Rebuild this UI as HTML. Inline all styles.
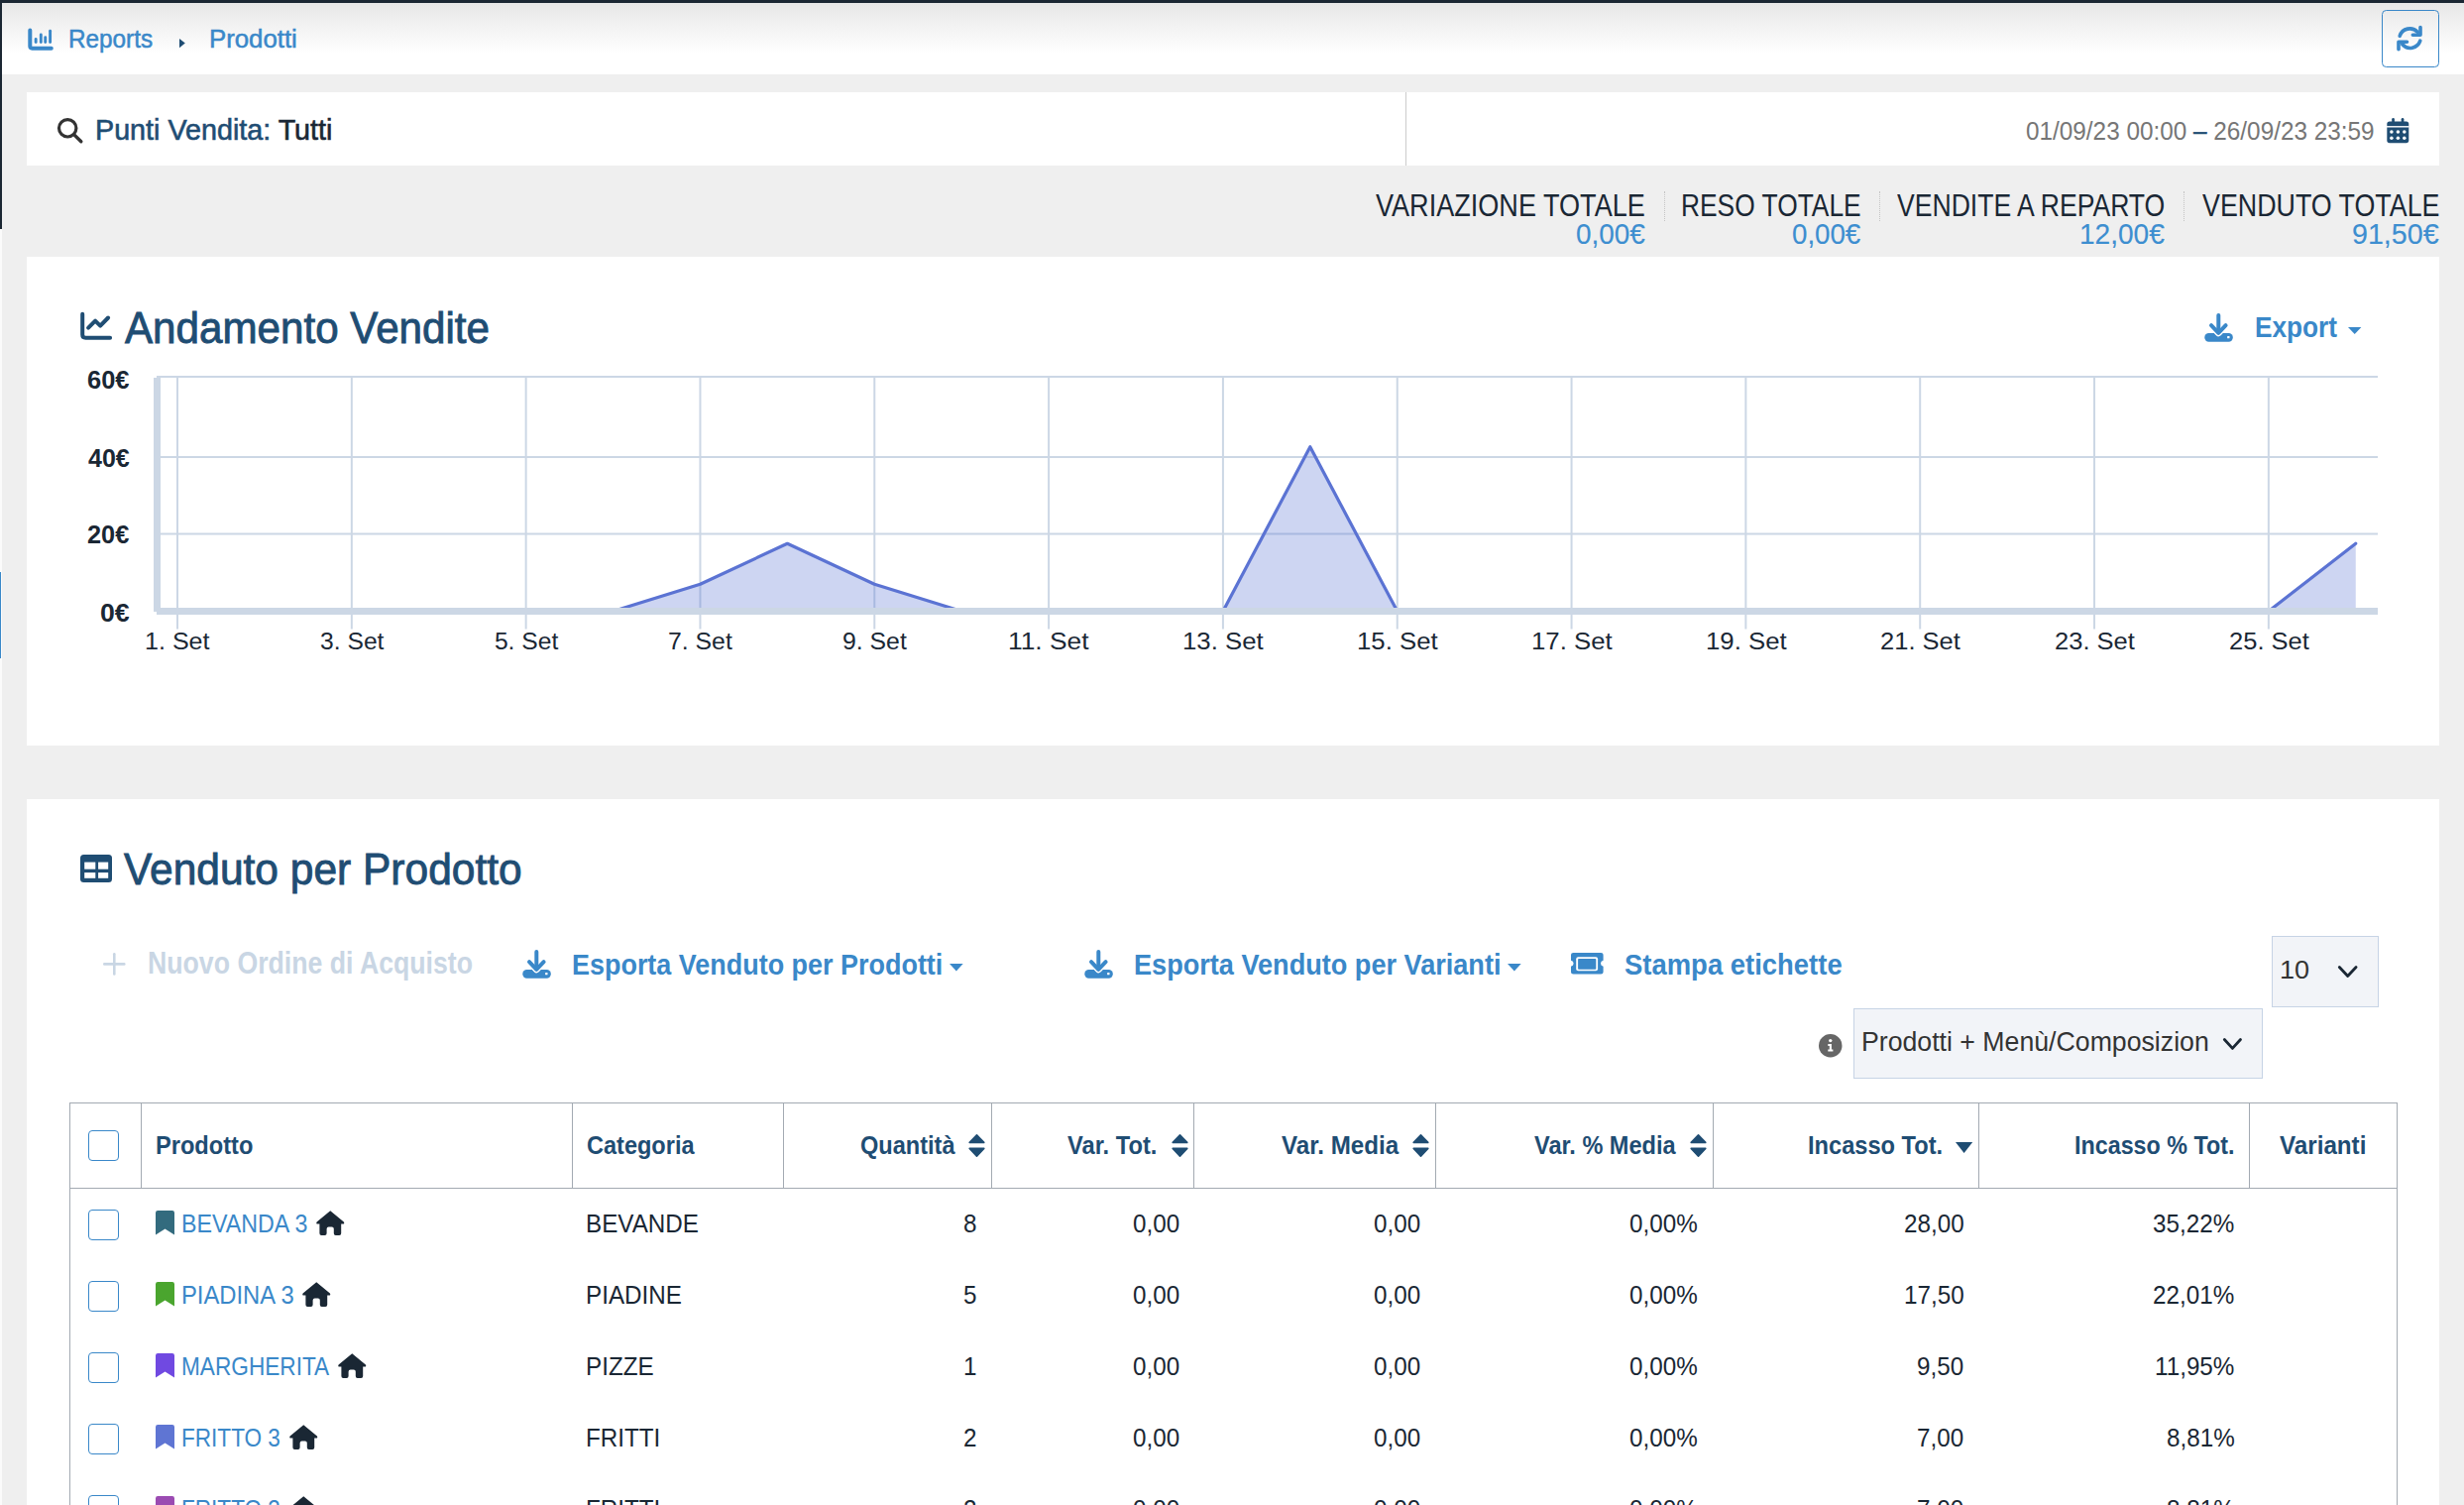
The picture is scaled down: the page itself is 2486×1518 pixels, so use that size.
<!DOCTYPE html><html><head><meta charset="utf-8"><title>Prodotti</title><style>html,body{margin:0;padding:0;width:2486px;height:1518px;overflow:hidden;background:#efefef;font-family:"Liberation Sans",sans-serif}.a{position:absolute}.t{position:absolute;white-space:nowrap;line-height:1;transform-origin:0 0}</style></head><body>
<div class="a" style="left:0px;top:0px;width:2486px;height:3px;background:#1b2733"></div>
<div class="a" style="left:0px;top:0px;width:2px;height:231px;background:#1b2733"></div>
<div class="a" style="left:0px;top:231px;width:2px;height:1287px;background:#fbfbfb"></div>
<div class="a" style="left:0px;top:577px;width:1px;height:87px;background:#3a88c9"></div>
<div class="a" style="left:2px;top:3px;width:2484px;height:72px;background:linear-gradient(#e7e7e7 0%,#fff 70%)"></div>
<svg class="a" style="left:28px;top:28px;width:26px;height:23px;overflow:visible" viewBox="0 0 26 23"><path d="M2.3,2.6 V18.6 Q2.3,20.7 4.4,20.7 H23.8" fill="none" stroke="#3a88c9" stroke-width="4" stroke-linecap="round" stroke-linejoin="round"/><line x1="8.15" y1="11.5" x2="8.15" y2="14.5" stroke="#3a88c9" stroke-width="2.9" stroke-linecap="round"/><line x1="13.3" y1="6.9" x2="13.3" y2="14.5" stroke="#3a88c9" stroke-width="2.9" stroke-linecap="round"/><line x1="17.75" y1="9.7" x2="17.75" y2="14.5" stroke="#3a88c9" stroke-width="2.9" stroke-linecap="round"/><line x1="22.6" y1="3.3" x2="22.6" y2="14.5" stroke="#3a88c9" stroke-width="2.9" stroke-linecap="round"/></svg>
<svg class="a" style="left:181px;top:38.8px;width:6px;height:9.2px;overflow:visible" viewBox="0 0 6 9.2"><polygon points="0,0 5.8,4.6 0,9.2" fill="#1f4d73"/></svg>
<div class="a" style="left:2403px;top:10px;width:58px;height:58px;box-sizing:border-box;border:1.6px solid #3a88c9;border-radius:4.5px"></div>
<svg class="a" style="left:2418px;top:25.5px;width:27px;height:25px;overflow:visible" viewBox="0 0 27 25"><g fill="none" stroke="#3a88c9" stroke-width="3.6" stroke-linecap="round" stroke-linejoin="round"><path d="M3.2,10.3 A10.6,10.6 0 0 1 21.2,6.4"/><path d="M16.3,9.3 H24 V1.6"/><path d="M23.8,15.2 A10.6,10.6 0 0 1 5.8,18.8"/><path d="M10.5,16.3 H2 V23.8"/></g></svg>
<div class="a" style="left:27px;top:93px;width:2434px;height:74px;background:#fff"></div>
<div class="a" style="left:1418px;top:93px;width:1px;height:74px;background:#cccccc"></div>
<svg class="a" style="left:57px;top:118px;width:27px;height:27px;overflow:visible" viewBox="0 0 27 27"><circle cx="11.2" cy="11.3" r="8.7" fill="none" stroke="#333" stroke-width="3.2"/><line x1="17.8" y1="17.9" x2="24.8" y2="24.8" stroke="#333" stroke-width="3.4" stroke-linecap="round"/></svg>
<svg class="a" style="left:2407.7px;top:118.9px;width:22.5px;height:25.2px;overflow:visible" viewBox="0 0 22.5 25.2"><rect x="0.3" y="3.4" width="22" height="21.8" rx="2.6" fill="#1f4d73"/><rect x="5.2" y="0" width="2.7" height="6" rx="1.35" fill="#1f4d73"/><rect x="14.7" y="0" width="2.7" height="6" rx="1.35" fill="#1f4d73"/><rect x="0" y="8.1" width="22.6" height="1.4" fill="#fff"/><circle cx="4.9" cy="14.1" r="1.75" fill="#fff"/><circle cx="4.9" cy="20.3" r="1.75" fill="#fff"/><circle cx="11.4" cy="14.1" r="1.75" fill="#fff"/><circle cx="11.4" cy="20.3" r="1.75" fill="#fff"/><circle cx="17.8" cy="14.1" r="1.75" fill="#fff"/><circle cx="17.8" cy="20.3" r="1.75" fill="#fff"/></svg>
<div class="a" style="left:1678.7px;top:193px;width:1px;height:30px;border-left:1px dotted #c4c4c4"></div>
<div class="a" style="left:1895.6px;top:193px;width:1px;height:30px;border-left:1px dotted #c4c4c4"></div>
<div class="a" style="left:2203px;top:193px;width:1px;height:30px;border-left:1px dotted #c4c4c4"></div>
<div class="a" style="left:27px;top:259px;width:2434px;height:493px;background:#fff"></div>
<svg class="a" style="left:81.3px;top:315.3px;width:32px;height:27.4px;overflow:visible" viewBox="0 0 32 27.4"><path d="M2.2,1.8 V22.5 Q2.2,25.7 5.4,25.7 H30.1" fill="none" stroke="#1f4d73" stroke-width="4" stroke-linecap="round" stroke-linejoin="round"/><polyline points="8.1,15.6 15.1,8.7 20.2,13.7 28.1,5.5" fill="none" stroke="#1f4d73" stroke-width="4" stroke-linecap="round" stroke-linejoin="round"/></svg>
<svg class="a" style="left:2224.4px;top:315.8px;width:29px;height:29px;overflow:visible" viewBox="0 0 29 29"><rect x="0.3" y="19.9" width="28.5" height="8.8" rx="4.2" fill="#3a88c9"/><polyline points="7,12.2 14.3,19.8 21.6,12.2" fill="none" stroke="#fff" stroke-width="6.8" stroke-linecap="round" stroke-linejoin="round"/><line x1="14.3" y1="2" x2="14.3" y2="19" stroke="#3a88c9" stroke-width="4" stroke-linecap="round"/><polyline points="7,12.2 14.3,19.8 21.6,12.2" fill="none" stroke="#3a88c9" stroke-width="4" stroke-linecap="round" stroke-linejoin="round"/><rect x="23.1" y="22.9" width="2.4" height="2.4" rx="0.5" fill="#fff"/></svg>
<svg class="a" style="left:2369.2px;top:330px;width:13.400000000000091px;height:7px;overflow:visible" viewBox="0 0 13.400000000000091 7"><polygon points="0,0 13.400000000000091,0 6.7000000000000455,7" fill="#3a88c9"/></svg>
<svg class="a" style="left:0;top:0;width:2486px;height:760px" viewBox="0 0 2486 760"><rect x="158" y="379" width="2241" height="2" fill="#ccd7e5"/><rect x="158" y="460" width="2241" height="2" fill="#ccd7e5"/><rect x="158" y="537.5" width="2241" height="2" fill="#ccd7e5"/><rect x="178.00" y="379" width="2" height="255.5" fill="#ccd7e5"/><rect x="353.82" y="379" width="2" height="255.5" fill="#ccd7e5"/><rect x="529.64" y="379" width="2" height="255.5" fill="#ccd7e5"/><rect x="705.46" y="379" width="2" height="255.5" fill="#ccd7e5"/><rect x="881.28" y="379" width="2" height="255.5" fill="#ccd7e5"/><rect x="1057.10" y="379" width="2" height="255.5" fill="#ccd7e5"/><rect x="1232.92" y="379" width="2" height="255.5" fill="#ccd7e5"/><rect x="1408.74" y="379" width="2" height="255.5" fill="#ccd7e5"/><rect x="1584.56" y="379" width="2" height="255.5" fill="#ccd7e5"/><rect x="1760.38" y="379" width="2" height="255.5" fill="#ccd7e5"/><rect x="1936.20" y="379" width="2" height="255.5" fill="#ccd7e5"/><rect x="2112.02" y="379" width="2" height="255.5" fill="#ccd7e5"/><rect x="2287.84" y="379" width="2" height="255.5" fill="#ccd7e5"/><polygon points="179.00,616.5 179.00,616.50 266.91,616.50 354.82,616.50 442.73,616.50 530.64,616.50 618.55,616.50 706.46,589.20 794.37,548.25 882.28,589.20 970.19,616.50 1058.10,616.50 1146.01,616.50 1233.92,616.50 1321.83,450.75 1409.74,616.50 1497.65,616.50 1585.56,616.50 1673.47,616.50 1761.38,616.50 1849.29,616.50 1937.20,616.50 2025.11,616.50 2113.02,616.50 2200.93,616.50 2288.84,616.50 2376.75,548.25 2376.75,616.5" fill="#5b73d3" fill-opacity="0.3"/><polyline points="179.00,616.50 266.91,616.50 354.82,616.50 442.73,616.50 530.64,616.50 618.55,616.50 706.46,589.20 794.37,548.25 882.28,589.20 970.19,616.50 1058.10,616.50 1146.01,616.50 1233.92,616.50 1321.83,450.75 1409.74,616.50 1497.65,616.50 1585.56,616.50 1673.47,616.50 1761.38,616.50 1849.29,616.50 1937.20,616.50 2025.11,616.50 2113.02,616.50 2200.93,616.50 2288.84,616.50 2376.75,548.25" fill="none" stroke="#5b73d3" stroke-width="3.2" stroke-linejoin="round" stroke-linecap="round"/><rect x="155" y="381" width="7" height="236" fill="#ccd7e5"/><rect x="158" y="613" width="2241" height="7" fill="#ccd7e5"/></svg>
<div class="a" style="left:27px;top:806px;width:2434px;height:720px;background:#fff"></div>
<svg class="a" style="left:81.4px;top:862px;width:32px;height:28px;overflow:visible" viewBox="0 0 32 28"><rect x="0" y="0" width="32" height="28" rx="3.5" fill="#1f4d73"/><rect x="4.2" y="7.6" width="11.1" height="7.1" fill="#fff"/><rect x="18.1" y="7.6" width="10.1" height="7.1" fill="#fff"/><rect x="4.2" y="18.1" width="11.1" height="5.7" fill="#fff"/><rect x="18.1" y="18.1" width="10.1" height="5.7" fill="#fff"/></svg>
<svg class="a" style="left:104px;top:960.8px;width:22.6px;height:22.8px;overflow:visible" viewBox="0 0 22.6 22.8"><g stroke="#c9d6e4" stroke-width="2.6" stroke-linecap="round"><line x1="11.3" y1="1.3" x2="11.3" y2="21.5"/><line x1="1.3" y1="11.4" x2="21.3" y2="11.4"/></g></svg>
<svg class="a" style="left:526.8px;top:958px;width:29px;height:29px;overflow:visible" viewBox="0 0 29 29"><rect x="0.3" y="19.9" width="28.5" height="8.8" rx="4.2" fill="#3a88c9"/><polyline points="7,12.2 14.3,19.8 21.6,12.2" fill="none" stroke="#fff" stroke-width="6.8" stroke-linecap="round" stroke-linejoin="round"/><line x1="14.3" y1="2" x2="14.3" y2="19" stroke="#3a88c9" stroke-width="4" stroke-linecap="round"/><polyline points="7,12.2 14.3,19.8 21.6,12.2" fill="none" stroke="#3a88c9" stroke-width="4" stroke-linecap="round" stroke-linejoin="round"/><rect x="23.1" y="22.9" width="2.4" height="2.4" rx="0.5" fill="#fff"/></svg>
<svg class="a" style="left:958px;top:971.5px;width:13.700000000000045px;height:7.5px;overflow:visible" viewBox="0 0 13.700000000000045 7.5"><polygon points="0,0 13.700000000000045,0 6.850000000000023,7.5" fill="#3a88c9"/></svg>
<svg class="a" style="left:1093.6px;top:958px;width:29px;height:29px;overflow:visible" viewBox="0 0 29 29"><rect x="0.3" y="19.9" width="28.5" height="8.8" rx="4.2" fill="#3a88c9"/><polyline points="7,12.2 14.3,19.8 21.6,12.2" fill="none" stroke="#fff" stroke-width="6.8" stroke-linecap="round" stroke-linejoin="round"/><line x1="14.3" y1="2" x2="14.3" y2="19" stroke="#3a88c9" stroke-width="4" stroke-linecap="round"/><polyline points="7,12.2 14.3,19.8 21.6,12.2" fill="none" stroke="#3a88c9" stroke-width="4" stroke-linecap="round" stroke-linejoin="round"/><rect x="23.1" y="22.9" width="2.4" height="2.4" rx="0.5" fill="#fff"/></svg>
<svg class="a" style="left:1521.3px;top:971.5px;width:13.700000000000045px;height:7.5px;overflow:visible" viewBox="0 0 13.700000000000045 7.5"><polygon points="0,0 13.700000000000045,0 6.850000000000023,7.5" fill="#3a88c9"/></svg>
<svg class="a" style="left:1584.9px;top:961.3px;width:32.6px;height:21.6px;overflow:visible" viewBox="0 0 32.6 21.6"><path d="M2.5,0 H30.1 Q32.6,0 32.6,2.5 V7.8 Q30,8.4 30,10.8 Q30,13.2 32.6,13.8 V19.1 Q32.6,21.6 30.1,21.6 H2.5 Q0,21.6 0,19.1 V13.8 Q2.6,13.2 2.6,10.8 Q2.6,8.4 0,7.8 V2.5 Q0,0 2.5,0 Z" fill="#3a88c9"/><rect x="5.2" y="4.3" width="21.9" height="14" rx="2" fill="#fff"/><rect x="7.1" y="5.9" width="18.2" height="10.8" rx="0.8" fill="#3a88c9"/></svg>
<div class="a" style="left:2292px;top:944px;width:108px;height:72px;box-sizing:border-box;background:#f2f4f8;border:1px solid #c6d3e5"></div>
<svg class="a" style="left:2359.3px;top:974px;width:19.4px;height:12px;overflow:visible" viewBox="0 0 19.4 12"><polyline points="1.3,1.5 9.7,10.5 18.099999999999998,1.5" fill="none" stroke="#1a2734" stroke-width="2.8" stroke-linecap="round" stroke-linejoin="round"/></svg>
<div class="a" style="left:1869.5px;top:1016.6px;width:413px;height:71px;box-sizing:border-box;background:#f2f4f8;border:1px solid #c6d3e5"></div>
<svg class="a" style="left:2242.8px;top:1046.5px;width:18.8px;height:11.9px;overflow:visible" viewBox="0 0 18.8 11.9"><polyline points="1.3,1.5 9.4,10.4 17.5,1.5" fill="none" stroke="#1a2734" stroke-width="2.8" stroke-linecap="round" stroke-linejoin="round"/></svg>
<svg class="a" style="left:1834.5px;top:1042.6px;width:23.5px;height:23.5px;overflow:visible" viewBox="0 0 23.5 23.5"><circle cx="11.75" cy="11.75" r="11.75" fill="#666"/><circle cx="11.75" cy="6.6" r="1.7" fill="#fff"/><path d="M9.3,10 H12.9 V15.6 H14.4 V17.6 H9.3 V15.6 H10.8 V12 H9.3 Z" fill="#fff"/></svg>
<div class="a" style="left:70px;top:1112px;width:2348.5px;height:600px;box-sizing:border-box;border:1px solid #a3aab2;border-width:1.2px 1.2px 0 1.2px"></div>
<div class="a" style="left:70px;top:1198px;width:2348.5px;height:1.2px;background:#a3aab2"></div>
<div class="a" style="left:142.0px;top:1112px;width:1.2px;height:86.5px;background:#a3aab2"></div>
<div class="a" style="left:576.9px;top:1112px;width:1.2px;height:86.5px;background:#a3aab2"></div>
<div class="a" style="left:789.9px;top:1112px;width:1.2px;height:86.5px;background:#a3aab2"></div>
<div class="a" style="left:999.8px;top:1112px;width:1.2px;height:86.5px;background:#a3aab2"></div>
<div class="a" style="left:1203.8000000000002px;top:1112px;width:1.2px;height:86.5px;background:#a3aab2"></div>
<div class="a" style="left:1448.2px;top:1112px;width:1.2px;height:86.5px;background:#a3aab2"></div>
<div class="a" style="left:1727.9px;top:1112px;width:1.2px;height:86.5px;background:#a3aab2"></div>
<div class="a" style="left:1995.8000000000002px;top:1112px;width:1.2px;height:86.5px;background:#a3aab2"></div>
<div class="a" style="left:2268.8px;top:1112px;width:1.2px;height:86.5px;background:#a3aab2"></div>
<div class="a" style="left:89.2px;top:1140.2px;width:30.5px;height:30.5px;box-sizing:border-box;border:1.6px solid #3a88c9;border-radius:4px;background:#fff"></div>
<svg class="a" style="left:977px;top:1144px;width:17px;height:23px;overflow:visible" viewBox="0 0 17 23"><path d="M1.2,8.4 L8.5,0.9 L15.8,8.4 Z" fill="#1f4d73" stroke="#1f4d73" stroke-width="1.6" stroke-linejoin="round"/><path d="M1.2,14.4 L15.8,14.4 L8.5,22.1 Z" fill="#1f4d73" stroke="#1f4d73" stroke-width="1.6" stroke-linejoin="round"/></svg>
<svg class="a" style="left:1182px;top:1144px;width:17px;height:23px;overflow:visible" viewBox="0 0 17 23"><path d="M1.2,8.4 L8.5,0.9 L15.8,8.4 Z" fill="#1f4d73" stroke="#1f4d73" stroke-width="1.6" stroke-linejoin="round"/><path d="M1.2,14.4 L15.8,14.4 L8.5,22.1 Z" fill="#1f4d73" stroke="#1f4d73" stroke-width="1.6" stroke-linejoin="round"/></svg>
<svg class="a" style="left:1424.7px;top:1144px;width:17px;height:23px;overflow:visible" viewBox="0 0 17 23"><path d="M1.2,8.4 L8.5,0.9 L15.8,8.4 Z" fill="#1f4d73" stroke="#1f4d73" stroke-width="1.6" stroke-linejoin="round"/><path d="M1.2,14.4 L15.8,14.4 L8.5,22.1 Z" fill="#1f4d73" stroke="#1f4d73" stroke-width="1.6" stroke-linejoin="round"/></svg>
<svg class="a" style="left:1705px;top:1144px;width:17px;height:23px;overflow:visible" viewBox="0 0 17 23"><path d="M1.2,8.4 L8.5,0.9 L15.8,8.4 Z" fill="#1f4d73" stroke="#1f4d73" stroke-width="1.6" stroke-linejoin="round"/><path d="M1.2,14.4 L15.8,14.4 L8.5,22.1 Z" fill="#1f4d73" stroke="#1f4d73" stroke-width="1.6" stroke-linejoin="round"/></svg>
<svg class="a" style="left:1972.8px;top:1151.5px;width:17.200000000000045px;height:11.099999999999909px;overflow:visible" viewBox="0 0 17.200000000000045 11.099999999999909"><polygon points="0,0 17.200000000000045,0 8.600000000000023,11.099999999999909" fill="#1f4d73"/></svg>
<div class="a" style="left:89.2px;top:1220.3px;width:30.5px;height:30.5px;box-sizing:border-box;border:1.6px solid #3a88c9;border-radius:4px;background:#fff"></div>
<svg class="a" style="left:157.2px;top:1221.1px;width:19px;height:25px;overflow:visible" viewBox="0 0 19 25"><path d="M0,2.2 Q0,0 2.2,0 H16.8 Q19,0 19,2.2 V24.6 L9.5,18.6 L0,24.6 Z" fill="#336b7e"/></svg>
<svg class="a" style="left:319.1px;top:1221px;width:28.5px;height:25px;overflow:visible" viewBox="0 0 28.5 25"><path d="M14.25,0.3 L27.9,11.6 Q29,13.6 27,13.6 H25.2 V23 Q25.2,24.9 23.3,24.9 H19.7 Q17.8,24.9 17.8,23 V18.5 Q17.8,16.5 15.8,16.5 H12.6 Q10.6,16.5 10.6,18.5 V23 Q10.6,24.9 8.7,24.9 H5.3 Q3.4,24.9 3.4,23 V13.6 H1.5 Q-0.5,13.6 0.6,11.6 Z" fill="#1a2734"/></svg>
<div class="a" style="left:89.2px;top:1292.3px;width:30.5px;height:30.5px;box-sizing:border-box;border:1.6px solid #3a88c9;border-radius:4px;background:#fff"></div>
<svg class="a" style="left:157.2px;top:1293.1px;width:19px;height:25px;overflow:visible" viewBox="0 0 19 25"><path d="M0,2.2 Q0,0 2.2,0 H16.8 Q19,0 19,2.2 V24.6 L9.5,18.6 L0,24.6 Z" fill="#4aa52e"/></svg>
<svg class="a" style="left:305.4px;top:1293px;width:28.5px;height:25px;overflow:visible" viewBox="0 0 28.5 25"><path d="M14.25,0.3 L27.9,11.6 Q29,13.6 27,13.6 H25.2 V23 Q25.2,24.9 23.3,24.9 H19.7 Q17.8,24.9 17.8,23 V18.5 Q17.8,16.5 15.8,16.5 H12.6 Q10.6,16.5 10.6,18.5 V23 Q10.6,24.9 8.7,24.9 H5.3 Q3.4,24.9 3.4,23 V13.6 H1.5 Q-0.5,13.6 0.6,11.6 Z" fill="#1a2734"/></svg>
<div class="a" style="left:89.2px;top:1364.3px;width:30.5px;height:30.5px;box-sizing:border-box;border:1.6px solid #3a88c9;border-radius:4px;background:#fff"></div>
<svg class="a" style="left:157.2px;top:1365.1px;width:19px;height:25px;overflow:visible" viewBox="0 0 19 25"><path d="M0,2.2 Q0,0 2.2,0 H16.8 Q19,0 19,2.2 V24.6 L9.5,18.6 L0,24.6 Z" fill="#7049e1"/></svg>
<svg class="a" style="left:341.3px;top:1365px;width:28.5px;height:25px;overflow:visible" viewBox="0 0 28.5 25"><path d="M14.25,0.3 L27.9,11.6 Q29,13.6 27,13.6 H25.2 V23 Q25.2,24.9 23.3,24.9 H19.7 Q17.8,24.9 17.8,23 V18.5 Q17.8,16.5 15.8,16.5 H12.6 Q10.6,16.5 10.6,18.5 V23 Q10.6,24.9 8.7,24.9 H5.3 Q3.4,24.9 3.4,23 V13.6 H1.5 Q-0.5,13.6 0.6,11.6 Z" fill="#1a2734"/></svg>
<div class="a" style="left:89.2px;top:1436.3px;width:30.5px;height:30.5px;box-sizing:border-box;border:1.6px solid #3a88c9;border-radius:4px;background:#fff"></div>
<svg class="a" style="left:157.2px;top:1437.1px;width:19px;height:25px;overflow:visible" viewBox="0 0 19 25"><path d="M0,2.2 Q0,0 2.2,0 H16.8 Q19,0 19,2.2 V24.6 L9.5,18.6 L0,24.6 Z" fill="#5f75d3"/></svg>
<svg class="a" style="left:291.9px;top:1437px;width:28.5px;height:25px;overflow:visible" viewBox="0 0 28.5 25"><path d="M14.25,0.3 L27.9,11.6 Q29,13.6 27,13.6 H25.2 V23 Q25.2,24.9 23.3,24.9 H19.7 Q17.8,24.9 17.8,23 V18.5 Q17.8,16.5 15.8,16.5 H12.6 Q10.6,16.5 10.6,18.5 V23 Q10.6,24.9 8.7,24.9 H5.3 Q3.4,24.9 3.4,23 V13.6 H1.5 Q-0.5,13.6 0.6,11.6 Z" fill="#1a2734"/></svg>
<div class="a" style="left:89.2px;top:1508.3px;width:30.5px;height:30.5px;box-sizing:border-box;border:1.6px solid #3a88c9;border-radius:4px;background:#fff"></div>
<svg class="a" style="left:157.2px;top:1509.1px;width:19px;height:25px;overflow:visible" viewBox="0 0 19 25"><path d="M0,2.2 Q0,0 2.2,0 H16.8 Q19,0 19,2.2 V24.6 L9.5,18.6 L0,24.6 Z" fill="#9b4bb2"/></svg>
<svg class="a" style="left:291.9px;top:1509px;width:28.5px;height:25px;overflow:visible" viewBox="0 0 28.5 25"><path d="M14.25,0.3 L27.9,11.6 Q29,13.6 27,13.6 H25.2 V23 Q25.2,24.9 23.3,24.9 H19.7 Q17.8,24.9 17.8,23 V18.5 Q17.8,16.5 15.8,16.5 H12.6 Q10.6,16.5 10.6,18.5 V23 Q10.6,24.9 8.7,24.9 H5.3 Q3.4,24.9 3.4,23 V13.6 H1.5 Q-0.5,13.6 0.6,11.6 Z" fill="#1a2734"/></svg>
<span class="t" style="left:68.76px;top:26.87px;font-size:25.80px;font-weight:normal;color:#3a88c9;transform:scaleX(0.9422);-webkit-text-stroke:0.5px currentColor;">Reports</span>
<span class="t" style="left:210.94px;top:26.87px;font-size:25.80px;font-weight:normal;color:#3a88c9;-webkit-text-stroke:0.5px currentColor;">Prodotti</span>
<span class="t" style="left:96.10px;top:115.75px;font-size:29.71px;font-weight:normal;color:#1f4d73;transform:scaleX(0.9666);-webkit-text-stroke:0.6px;">Punti Vendita: <span style="color:#1a2734">Tutti</span></span>
<span class="t" style="left:2043.63px;top:119.87px;font-size:25.22px;font-weight:normal;color:#767676;transform:scaleX(0.9642);">01/09/23 00:00 <span style="color:#1f4d73;-webkit-text-stroke:0.4px currentColor">–</span> 26/09/23 23:59</span>
<span class="t" style="left:1388.43px;top:192.13px;font-size:30.43px;font-weight:normal;color:#1a2734;transform:scaleX(0.8900);">VARIAZIONE TOTALE</span>
<span class="t" style="left:1589.88px;top:221.22px;font-size:29.86px;font-weight:normal;color:#3d8ed0;transform:scaleX(0.9338);-webkit-text-stroke:0.15px currentColor;">0,00€</span>
<span class="t" style="left:1696.19px;top:192.13px;font-size:30.43px;font-weight:normal;color:#1a2734;transform:scaleX(0.8663);">RESO TOTALE</span>
<span class="t" style="left:1807.89px;top:221.22px;font-size:29.86px;font-weight:normal;color:#3d8ed0;transform:scaleX(0.9269);-webkit-text-stroke:0.15px currentColor;">0,00€</span>
<span class="t" style="left:1914.43px;top:192.13px;font-size:30.43px;font-weight:normal;color:#1a2734;transform:scaleX(0.8736);">VENDITE A REPARTO</span>
<span class="t" style="left:2098.26px;top:221.22px;font-size:29.86px;font-weight:normal;color:#3d8ed0;transform:scaleX(0.9392);-webkit-text-stroke:0.15px currentColor;">12,00€</span>
<span class="t" style="left:2221.73px;top:192.13px;font-size:30.43px;font-weight:normal;color:#1a2734;transform:scaleX(0.8816);">VENDUTO TOTALE</span>
<span class="t" style="left:2372.97px;top:221.22px;font-size:29.86px;font-weight:normal;color:#3d8ed0;transform:scaleX(0.9589);-webkit-text-stroke:0.15px currentColor;">91,50€</span>
<span class="t" style="left:125.50px;top:308.75px;font-size:44.06px;font-weight:normal;color:#1f4d73;transform:scaleX(0.9571);-webkit-text-stroke:0.9px currentColor;">Andamento Vendite</span>
<span class="t" style="left:2275.17px;top:315.30px;font-size:30.00px;font-weight:bold;color:#3a88c9;transform:scaleX(0.8738);">Export</span>
<span class="t" style="left:87.98px;top:369.60px;font-size:26.23px;font-weight:bold;color:#1a2734;transform:scaleX(0.9708);">60€</span>
<span class="t" style="left:88.75px;top:449.57px;font-size:25.22px;font-weight:bold;color:#1a2734;transform:scaleX(0.9914);">40€</span>
<span class="t" style="left:88.24px;top:525.76px;font-size:26.52px;font-weight:bold;color:#1a2734;transform:scaleX(0.9543);">20€</span>
<span class="t" style="left:100.93px;top:606.45px;font-size:25.94px;font-weight:bold;color:#1a2734;transform:scaleX(1.0279);">0€</span>
<span class="t" style="left:146.24px;top:635.06px;font-size:24.64px;font-weight:normal;color:#1a2734;transform:scaleX(1.0187);">1. Set</span>
<span class="t" style="left:323.08px;top:635.06px;font-size:24.64px;font-weight:normal;color:#1a2734;">3. Set</span>
<span class="t" style="left:498.90px;top:635.06px;font-size:24.64px;font-weight:normal;color:#1a2734;">5. Set</span>
<span class="t" style="left:674.47px;top:635.06px;font-size:24.64px;font-weight:normal;color:#1a2734;transform:scaleX(1.0068);">7. Set</span>
<span class="t" style="left:850.29px;top:635.06px;font-size:24.64px;font-weight:normal;color:#1a2734;transform:scaleX(1.0068);">9. Set</span>
<span class="t" style="left:1017.29px;top:635.06px;font-size:24.64px;font-weight:normal;color:#1a2734;transform:scaleX(1.0707);">11. Set</span>
<span class="t" style="left:1193.16px;top:635.06px;font-size:24.64px;font-weight:normal;color:#1a2734;transform:scaleX(1.0463);">13. Set</span>
<span class="t" style="left:1368.98px;top:635.06px;font-size:24.64px;font-weight:normal;color:#1a2734;transform:scaleX(1.0463);">15. Set</span>
<span class="t" style="left:1544.80px;top:635.06px;font-size:24.64px;font-weight:normal;color:#1a2734;transform:scaleX(1.0463);">17. Set</span>
<span class="t" style="left:1720.62px;top:635.06px;font-size:24.64px;font-weight:normal;color:#1a2734;transform:scaleX(1.0463);">19. Set</span>
<span class="t" style="left:1897.22px;top:635.06px;font-size:24.64px;font-weight:normal;color:#1a2734;transform:scaleX(1.0362);">21. Set</span>
<span class="t" style="left:2073.04px;top:635.06px;font-size:24.64px;font-weight:normal;color:#1a2734;transform:scaleX(1.0362);">23. Set</span>
<span class="t" style="left:2248.86px;top:635.06px;font-size:24.64px;font-weight:normal;color:#1a2734;transform:scaleX(1.0362);">25. Set</span>
<span class="t" style="left:124.87px;top:855.92px;font-size:43.62px;font-weight:normal;color:#1f4d73;transform:scaleX(0.9745);-webkit-text-stroke:0.9px currentColor;">Venduto per Prodotto</span>
<span class="t" style="left:148.83px;top:956.66px;font-size:30.87px;font-weight:bold;color:#c9d6e4;transform:scaleX(0.8645);">Nuovo Ordine di Acquisto</span>
<span class="t" style="left:576.51px;top:957.87px;font-size:29.57px;font-weight:bold;color:#3a88c9;transform:scaleX(0.9116);">Esporta Venduto per Prodotti</span>
<span class="t" style="left:1143.90px;top:957.87px;font-size:29.57px;font-weight:bold;color:#3a88c9;transform:scaleX(0.9167);">Esporta Venduto per Varianti</span>
<span class="t" style="left:1639.18px;top:957.75px;font-size:29.71px;font-weight:bold;color:#3a88c9;transform:scaleX(0.9241);">Stampa etichette</span>
<span class="t" style="left:2300.43px;top:966.29px;font-size:25.07px;font-weight:normal;color:#333;transform:scaleX(1.0797);">10</span>
<span class="t" style="left:1877.86px;top:1036.48px;font-size:28.26px;font-weight:normal;color:#333;transform:scaleX(0.9445);">Prodotti + Menù/Composizion</span>
<span class="t" style="left:157.25px;top:1141.83px;font-size:26.09px;font-weight:bold;color:#1f4d73;transform:scaleX(0.9055);">Prodotto</span>
<span class="t" style="left:591.96px;top:1141.83px;font-size:26.09px;font-weight:bold;color:#1f4d73;transform:scaleX(0.9023);">Categoria</span>
<span class="t" style="left:868.16px;top:1141.83px;font-size:26.09px;font-weight:bold;color:#1f4d73;transform:scaleX(0.9030);">Quantità</span>
<span class="t" style="left:1077.26px;top:1141.83px;font-size:26.09px;font-weight:bold;color:#1f4d73;transform:scaleX(0.9081);">Var. Tot.</span>
<span class="t" style="left:1293.16px;top:1141.83px;font-size:26.09px;font-weight:bold;color:#1f4d73;transform:scaleX(0.9266);">Var. Media</span>
<span class="t" style="left:1547.86px;top:1141.83px;font-size:26.09px;font-weight:bold;color:#1f4d73;transform:scaleX(0.9020);">Var. % Media</span>
<span class="t" style="left:1823.64px;top:1141.83px;font-size:26.09px;font-weight:bold;color:#1f4d73;transform:scaleX(0.9065);">Incasso Tot.</span>
<span class="t" style="left:2093.07px;top:1141.83px;font-size:26.09px;font-weight:bold;color:#1f4d73;transform:scaleX(0.8937);">Incasso % Tot.</span>
<span class="t" style="left:2299.96px;top:1141.83px;font-size:26.09px;font-weight:bold;color:#1f4d73;transform:scaleX(0.9274);">Varianti</span>
<span class="t" style="left:183.44px;top:1221.03px;font-size:26.09px;font-weight:normal;color:#3a88c9;transform:scaleX(0.8904);">BEVANDA 3</span>
<span class="t" style="left:590.96px;top:1221.03px;font-size:26.09px;font-weight:normal;color:#1a2734;transform:scaleX(0.9290);">BEVANDE</span>
<span class="t" style="left:972.24px;top:1221.03px;font-size:26.09px;font-weight:normal;color:#1a2734;transform:scaleX(0.9290);">8</span>
<span class="t" style="left:1142.61px;top:1221.03px;font-size:26.09px;font-weight:normal;color:#1a2734;transform:scaleX(0.9290);">0,00</span>
<span class="t" style="left:1386.41px;top:1221.03px;font-size:26.09px;font-weight:normal;color:#1a2734;transform:scaleX(0.9290);">0,00</span>
<span class="t" style="left:1644.14px;top:1221.03px;font-size:26.09px;font-weight:normal;color:#1a2734;transform:scaleX(0.9290);">0,00%</span>
<span class="t" style="left:1920.88px;top:1221.03px;font-size:26.09px;font-weight:normal;color:#1a2734;transform:scaleX(0.9290);">28,00</span>
<span class="t" style="left:2172.37px;top:1221.03px;font-size:26.09px;font-weight:normal;color:#1a2734;transform:scaleX(0.9290);">35,22%</span>
<span class="t" style="left:183.40px;top:1293.03px;font-size:26.09px;font-weight:normal;color:#3a88c9;transform:scaleX(0.9118);">PIADINA 3</span>
<span class="t" style="left:590.96px;top:1293.03px;font-size:26.09px;font-weight:normal;color:#1a2734;transform:scaleX(0.9290);">PIADINE</span>
<span class="t" style="left:972.24px;top:1293.03px;font-size:26.09px;font-weight:normal;color:#1a2734;transform:scaleX(0.9290);">5</span>
<span class="t" style="left:1142.61px;top:1293.03px;font-size:26.09px;font-weight:normal;color:#1a2734;transform:scaleX(0.9290);">0,00</span>
<span class="t" style="left:1386.41px;top:1293.03px;font-size:26.09px;font-weight:normal;color:#1a2734;transform:scaleX(0.9290);">0,00</span>
<span class="t" style="left:1644.14px;top:1293.03px;font-size:26.09px;font-weight:normal;color:#1a2734;transform:scaleX(0.9290);">0,00%</span>
<span class="t" style="left:1920.88px;top:1293.03px;font-size:26.09px;font-weight:normal;color:#1a2734;transform:scaleX(0.9290);">17,50</span>
<span class="t" style="left:2172.37px;top:1293.03px;font-size:26.09px;font-weight:normal;color:#1a2734;transform:scaleX(0.9290);">22,01%</span>
<span class="t" style="left:183.49px;top:1365.03px;font-size:26.09px;font-weight:normal;color:#3a88c9;transform:scaleX(0.8679);">MARGHERITA</span>
<span class="t" style="left:590.96px;top:1365.03px;font-size:26.09px;font-weight:normal;color:#1a2734;transform:scaleX(0.9290);">PIZZE</span>
<span class="t" style="left:972.24px;top:1365.03px;font-size:26.09px;font-weight:normal;color:#1a2734;transform:scaleX(0.9290);">1</span>
<span class="t" style="left:1142.61px;top:1365.03px;font-size:26.09px;font-weight:normal;color:#1a2734;transform:scaleX(0.9290);">0,00</span>
<span class="t" style="left:1386.41px;top:1365.03px;font-size:26.09px;font-weight:normal;color:#1a2734;transform:scaleX(0.9290);">0,00</span>
<span class="t" style="left:1644.14px;top:1365.03px;font-size:26.09px;font-weight:normal;color:#1a2734;transform:scaleX(0.9290);">0,00%</span>
<span class="t" style="left:1934.21px;top:1365.03px;font-size:26.09px;font-weight:normal;color:#1a2734;transform:scaleX(0.9290);">9,50</span>
<span class="t" style="left:2174.31px;top:1365.03px;font-size:26.09px;font-weight:normal;color:#1a2734;transform:scaleX(0.9290);">11,95%</span>
<span class="t" style="left:183.49px;top:1437.03px;font-size:26.09px;font-weight:normal;color:#3a88c9;transform:scaleX(0.8656);">FRITTO 3</span>
<span class="t" style="left:590.96px;top:1437.03px;font-size:26.09px;font-weight:normal;color:#1a2734;transform:scaleX(0.9290);">FRITTI</span>
<span class="t" style="left:972.24px;top:1437.03px;font-size:26.09px;font-weight:normal;color:#1a2734;transform:scaleX(0.9290);">2</span>
<span class="t" style="left:1142.61px;top:1437.03px;font-size:26.09px;font-weight:normal;color:#1a2734;transform:scaleX(0.9290);">0,00</span>
<span class="t" style="left:1386.41px;top:1437.03px;font-size:26.09px;font-weight:normal;color:#1a2734;transform:scaleX(0.9290);">0,00</span>
<span class="t" style="left:1644.14px;top:1437.03px;font-size:26.09px;font-weight:normal;color:#1a2734;transform:scaleX(0.9290);">0,00%</span>
<span class="t" style="left:1934.21px;top:1437.03px;font-size:26.09px;font-weight:normal;color:#1a2734;transform:scaleX(0.9290);">7,00</span>
<span class="t" style="left:2185.94px;top:1437.03px;font-size:26.09px;font-weight:normal;color:#1a2734;transform:scaleX(0.9290);">8,81%</span>
<span class="t" style="left:183.49px;top:1509.03px;font-size:26.09px;font-weight:normal;color:#3a88c9;transform:scaleX(0.8656);">FRITTO 3</span>
<span class="t" style="left:590.96px;top:1509.03px;font-size:26.09px;font-weight:normal;color:#1a2734;transform:scaleX(0.9290);">FRITTI</span>
<span class="t" style="left:972.24px;top:1509.03px;font-size:26.09px;font-weight:normal;color:#1a2734;transform:scaleX(0.9290);">2</span>
<span class="t" style="left:1142.61px;top:1509.03px;font-size:26.09px;font-weight:normal;color:#1a2734;transform:scaleX(0.9290);">0,00</span>
<span class="t" style="left:1386.41px;top:1509.03px;font-size:26.09px;font-weight:normal;color:#1a2734;transform:scaleX(0.9290);">0,00</span>
<span class="t" style="left:1644.14px;top:1509.03px;font-size:26.09px;font-weight:normal;color:#1a2734;transform:scaleX(0.9290);">0,00%</span>
<span class="t" style="left:1934.21px;top:1509.03px;font-size:26.09px;font-weight:normal;color:#1a2734;transform:scaleX(0.9290);">7,00</span>
<span class="t" style="left:2185.94px;top:1509.03px;font-size:26.09px;font-weight:normal;color:#1a2734;transform:scaleX(0.9290);">8,81%</span>
</body></html>
